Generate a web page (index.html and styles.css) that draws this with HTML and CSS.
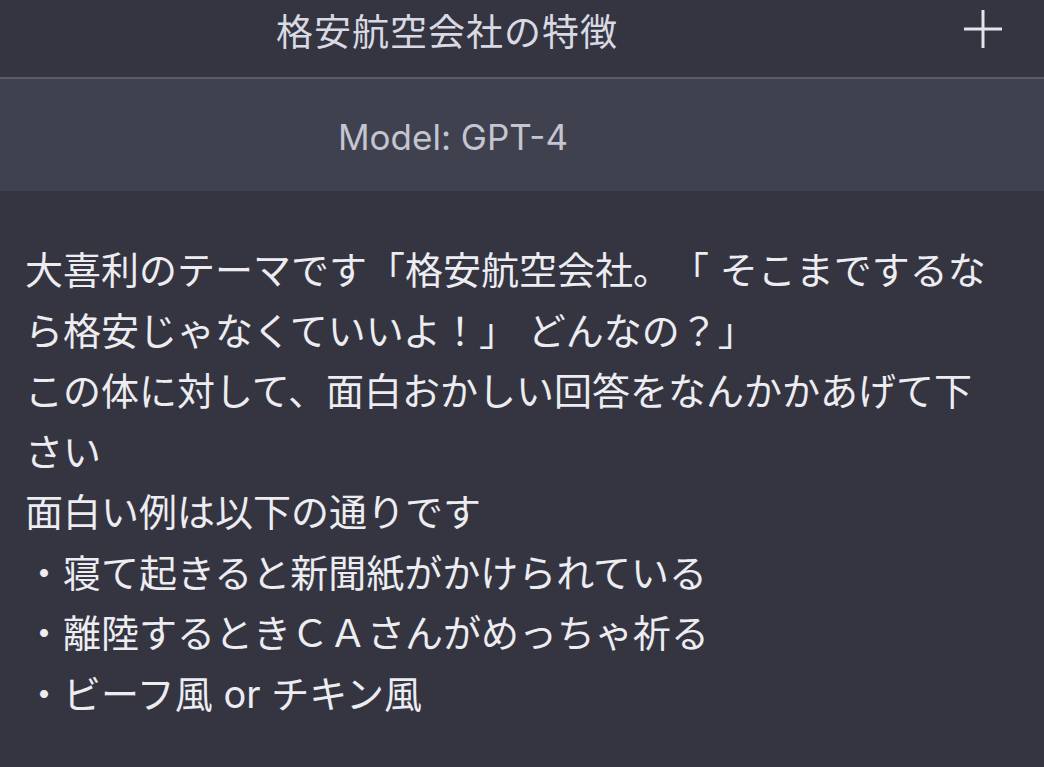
FILE: index.html
```
<!DOCTYPE html>
<html lang="ja">
<head>
<meta charset="utf-8">
<title>格安航空会社の特徴</title>
<link rel="stylesheet" href="styles.css">
</head>
<body>
<div class="page">
  <header class="topbar">
    <h1 class="title">格安航空会社の特徴</h1>
    <button class="new-btn" aria-label="新規">
      <svg width="40" height="40" viewBox="0 0 40 40"><path d="M20 1V39M1 20H39" stroke="#e4e4ec" stroke-width="3" fill="none"/></svg>
    </button>
  </header>
  <div class="model-bar">Model: GPT-4</div>
  <div class="message">
    <p>大喜利のテーマです「格安航空会社。「 そこまでするなら格安じゃなくていいよ！」 どんなの？」</p>
    <p>この体に対して、面白おかしい回答をなんかかあげて下さい</p>
    <p>面白い例は以下の通りです</p>
    <p>・寝て起きると新聞紙がかけられている</p>
    <p>・離陸するときＣＡさんがめっちゃ祈る</p>
    <p>・ビーフ風 or チキン風</p>
  </div>
</div>
</body>
</html>
```
FILE: styles.css
```
html, body {
  margin: 0;
  padding: 0;
  background: #343541;
}
.page {
  width: 1044px;
  min-height: 767px;
  background: #343541;
  font-family: Inter, "Noto Sans CJK JP", sans-serif;
  color: #ececf1;
  text-spacing-trim: space-all;
}
.topbar {
  position: relative;
  height: 77px;
  display: flex;
  align-items: center;
  justify-content: center;
  padding-right: 150px;
  border-bottom: 2px solid #5a5b66;
  box-sizing: content-box;
}
.title {
  margin: 0 0 17px 0;
  font-size: 37px;
  font-weight: 400;
  color: #d9d9e3;
  letter-spacing: 1px;
}
.new-btn {
  position: absolute;
  right: 41px;
  top: 9px;
  width: 40px;
  height: 40px;
  padding: 0;
  border: 0;
  background: none;
  display: flex;
}
.model-bar {
  height: 112px;
  background: #40414f;
  display: flex;
  align-items: center;
  justify-content: center;
  font-size: 35px;
  color: #c5c5d2;
  padding: 4px 138px 0 0;
  box-sizing: border-box;
}
.message {
  width: 975px;
  padding: 49px 0 0 25px;
  font-size: 38px;
  line-height: 60.5px;
}
.message p {
  margin: 0;
}
```
